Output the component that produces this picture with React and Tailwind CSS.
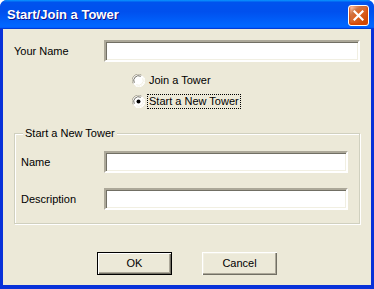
import React from "react";

const font = { fontFamily: '"Liberation Sans", Arial, sans-serif' };

function TextBox({ width }) {
  return (
    <input
      type="text"
      className={`h-[22px] ${width} bg-white border-2 border-t-[#ACA899] border-l-[#ACA899] border-r-white border-b-white shadow-[inset_1px_1px_0_#716F64,inset_-1px_-1px_0_#F1EFE2] outline-none px-1 text-[11px]`}
    />
  );
}

function Radio({ checked }) {
  return (
    <svg width="13" height="13" viewBox="0 0 13 13" className="shrink-0">
      <circle cx="6.5" cy="6.5" r="6" fill="#ffffff" />
      <path d="M1.2 9.5 A6 6 0 0 1 9.5 1.2" stroke="#ACA899" strokeWidth="1" fill="none" />
      <path d="M2.3 8.8 A4.8 4.8 0 0 1 8.8 2.3" stroke="#716F64" strokeWidth="1" fill="none" />
      <path d="M11.8 3.5 A6 6 0 0 1 3.5 11.8" stroke="#ffffff" strokeWidth="1" fill="none" />
      <path d="M10.7 4.2 A4.8 4.8 0 0 1 4.2 10.7" stroke="#F1EFE2" strokeWidth="1" fill="none" />
      {checked && <circle cx="6.5" cy="6.5" r="2" fill="#000000" />}
    </svg>
  );
}

function Button({ children, isDefault }) {
  return (
    <button
      className={`w-[75px] h-[23px] bg-[#ECE9D8] text-[11px] text-black flex items-center justify-center ${
        isDefault
          ? "border border-black shadow-[inset_1px_1px_0_#ffffff,inset_-1px_-1px_0_#716F64,inset_-2px_-2px_0_#ACA899]"
          : "shadow-[inset_1px_1px_0_#ffffff,inset_-1px_-1px_0_#716F64,inset_-2px_-2px_0_#ACA899,inset_2px_2px_0_#F1EFE2]"
      }`}
    >
      {children}
    </button>
  );
}

export default function App() {
  return (
    <div
      className="w-[374px] h-[289px] rounded-t-[7px] overflow-hidden flex flex-col bg-[#0831D9]"
      style={font}
    >
      <div className="h-[29px] shrink-0 flex items-start justify-between pl-[7px] pr-[5px] bg-[linear-gradient(180deg,#0997ff,#0053ee_8%,#0050ee_40%,#0066ff_88%,#0066ff_93%,#005bff_95%,#003dd7_96%,#003dd7)]">
        <span className="mt-[7px] text-white font-bold text-[13px] leading-[16px] [text-shadow:1px_1px_0_#0f1089]">
          Start/Join a Tower
        </span>
        <div className="mt-[5px] w-[21px] h-[21px] rounded-[3px] border border-white flex items-center justify-center bg-[radial-gradient(circle_at_90%_90%,#cc4600_0,#dc6527_55%,#cd7546_70%,#ffccb2_90%,#ffffff_100%)] shadow-[inset_0_-1px_2px_1px_#da4600]">
          <svg width="11" height="11" viewBox="0 0 11 11">
            <path d="M1.5 1.5 L9.5 9.5 M9.5 1.5 L1.5 9.5" stroke="#ffffff" strokeWidth="2.2" strokeLinecap="square" />
          </svg>
        </div>
      </div>

      <div className="flex-1 mx-[3px] mb-[4px] bg-[#ECE9D8] text-black text-[11px] flex flex-col pt-[11px] pl-[11px]">
        <div className="flex items-center">
          <span className="w-[90px]">Your Name</span>
          <TextBox width="w-[256px]" />
        </div>

        <div className="mt-[8px] ml-[118px] flex flex-col whitespace-nowrap">
          <div className="h-[21px] flex items-center gap-[2px]">
            <Radio />
            <span className="px-[2px]">Join a Tower</span>
          </div>
          <div className="h-[21px] flex items-center gap-[2px]">
            <Radio checked />
            <span className="px-[1px] h-[15px] leading-[13px] border border-dotted border-black">Start a New Tower</span>
          </div>
        </div>

        <div className="relative mt-[21px] w-[346px] h-[91px] border border-[#D0D0BF] shadow-[inset_1px_1px_0_#ffffff,1px_1px_0_#ffffff] flex flex-col gap-[15px] pt-[17px] pl-[6px]">
          <span className="absolute left-[8px] -top-[8px] px-[2px] bg-[#ECE9D8] leading-[14px]">
            Start a New Tower
          </span>
          <div className="flex items-center">
            <span className="w-[83px]">Name</span>
            <TextBox width="w-[244px]" />
          </div>
          <div className="flex items-center">
            <span className="w-[83px]">Description</span>
            <TextBox width="w-[244px]" />
          </div>
        </div>

        <div className="mt-[28px] -ml-[11px] flex justify-center gap-[30px]">
          <Button isDefault>OK</Button>
          <Button>Cancel</Button>
        </div>
      </div>
    </div>
  );
}
